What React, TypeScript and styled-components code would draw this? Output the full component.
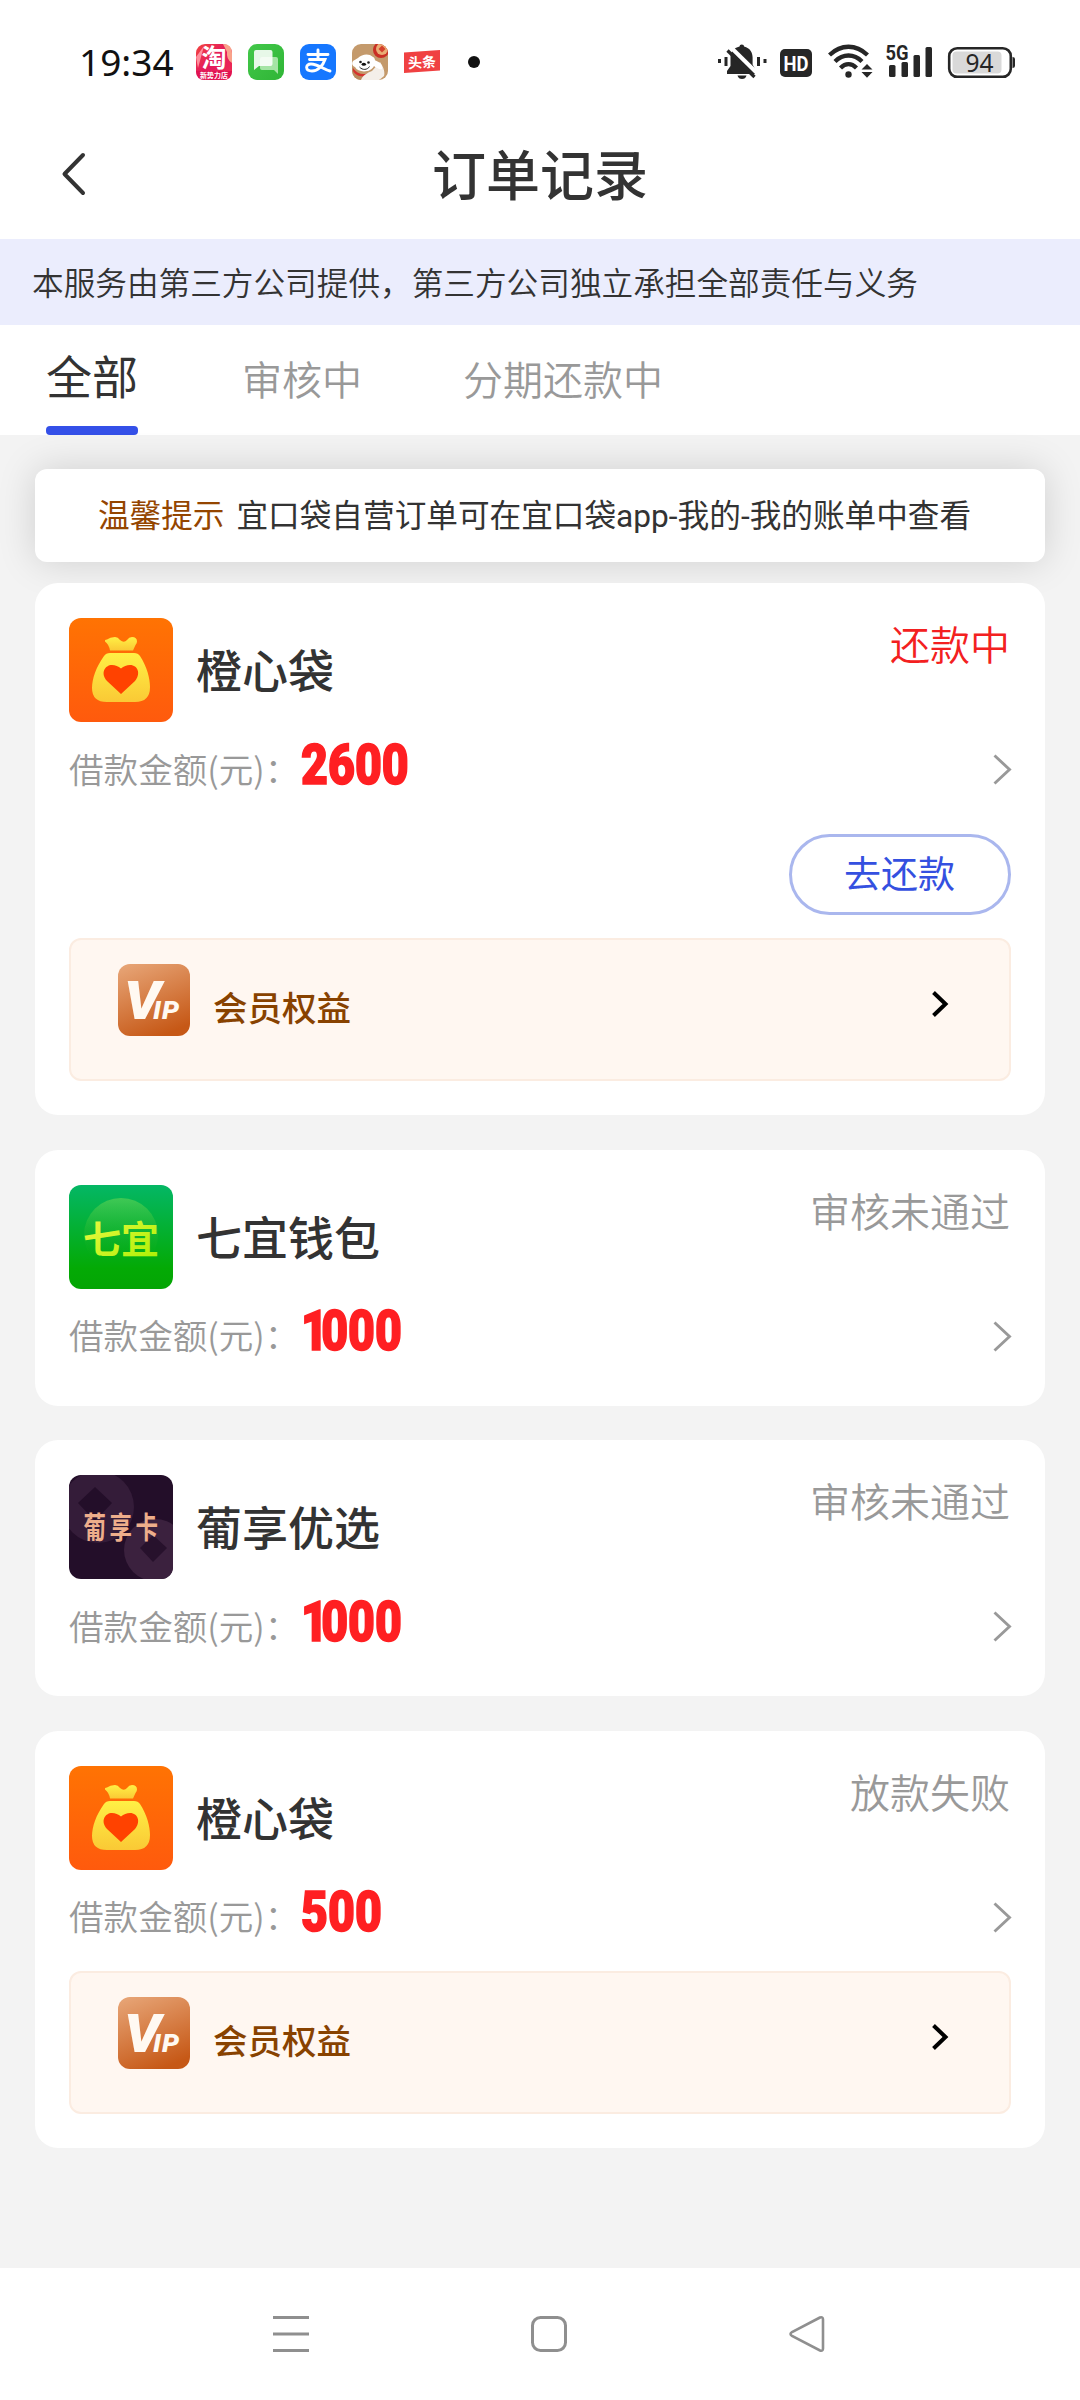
import React from 'react';
import styled, { createGlobalStyle } from 'styled-components';

const FONT = '"Noto Sans", "Noto Sans CJK SC", sans-serif';

const GlobalStyle = createGlobalStyle`
  * { box-sizing: border-box; }
  body { margin: 0; background: #f3f3f3; font-family: ${FONT}; color: #333; }
  svg { overflow: visible; }
`;

const Screen = styled.div`
  width: 1080px;
  height: 2400px;
  display: flex;
  flex-direction: column;
  background: #f3f3f3;
  overflow: hidden;
`;

const StatusBar = styled.div`
  height: 110px;
  flex: none;
  padding: 14px 64px 0 79px;
  display: flex;
  align-items: center;
  justify-content: space-between;
  background: #fff;
`;

const Time = styled.span`
  width: 118px;
  font-size: 37px;
  line-height: 44px;
  font-weight: 450;
  color: #111;
`;

const StatusLeft = styled.div`
  display: flex;
  align-items: center;
  gap: 16px;
  ${Time} { margin-right: -17px; }
`;

const StatusRight = styled.div`
  display: flex;
  align-items: center;
`;

const TitleBar = styled.header`
  height: 129px;
  flex: none;
  display: grid;
  grid-template-columns: 100px 1fr 100px;
  align-items: center;
  background: #fff;
`;

const BackButton = styled.button`
  border: 0;
  background: none;
  padding: 0 0 2px 60px;
  display: flex;
`;

const Title = styled.h1`
  margin: 0;
  font-size: 54px;
  line-height: 80px;
  font-weight: 500;
  text-align: center;
`;

const Notice = styled.div`
  height: 86px;
  flex: none;
  padding: 0 0 3px 32px;
  display: flex;
  align-items: center;
  background: #ebedfd;
  font-size: 31.65px;
  font-weight: 350;
  white-space: nowrap;
`;

const Tabs = styled.nav`
  height: 110px;
  flex: none;
  padding: 0 46px;
  display: flex;
  background: #fff;
`;

const Tab = styled.div<{ $active?: boolean }>`
  height: 110px;
  margin-right: ${p => (p.$active ? 104 : 101)}px;
  padding-top: ${p => (p.$active ? 1 : 4)}px;
  display: flex;
  flex-direction: column;
  justify-content: space-between;
  line-height: ${p => (p.$active ? 100 : 101)}px;
  font-size: ${p => (p.$active ? 46 : 40)}px;
  font-weight: ${p => (p.$active ? 400 : 350)};
  color: ${p => (p.$active ? '#333' : '#999')};
  &::after {
    content: '';
    height: 9px;
    border-radius: 4px;
    background: ${p => (p.$active ? '#3450e8' : 'transparent')};
  }
`;

const Tip = styled.div`
  height: 93px;
  flex: none;
  margin: 34px 35px 21px;
  border-radius: 12px;
  background: #fff;
  box-shadow: 0 0 38px rgba(0, 0, 0, 0.15);
  display: flex;
  align-items: center;
  justify-content: center;
  gap: 12px;
  padding: 0 11px 6px 0;
  font-family: Roboto, "Noto Sans CJK SC", sans-serif;
  font-size: 31.65px;
  font-weight: 370;
  white-space: nowrap;
`;

const TipLabel = styled.span`
  color: #944500;
`;

const List = styled.main`
  flex: 1;
  padding: 0 35px;
  display: flex;
  flex-direction: column;
  gap: 34.5px;
`;

const Card = styled.section`
  padding: 35px 34px 34px;
  border-radius: 23px;
  background: #fff;
`;

const CardHead = styled.div`
  height: 104px;
  display: flex;
  align-items: center;
`;

const Logo = styled.svg`
  width: 104px;
  height: 104px;
  border-radius: 12px;
  flex: none;
  overflow: hidden;
`;

const Name = styled.h2`
  margin: 0 0 0 23px;
  font-size: 46px;
  font-weight: 500;
  line-height: 60px;
`;

const State = styled.span<{ $live?: boolean }>`
  margin: 0 1px 0 auto;
  align-self: flex-start;
  font-size: 40px;
  font-weight: 350;
  line-height: 54px;
  color: ${p => (p.$live ? '#f32020' : '#999')};
`;

const AmountRow = styled.div`
  height: 83px;
  padding-top: 12px;
  display: flex;
  align-items: center;
  color: #999;
`;

const AmountLabel = styled.span`
  width: 232px;
  padding-bottom: 4px;
  font-family: "Noto Sans CJK SC", sans-serif;
  font-size: 34.6px;
  line-height: 48px;
  font-weight: 350;
  white-space: nowrap;
`;

const Amount = styled.span<{ $tight: boolean }>`
  flex: 1;
  font-family: Roboto, sans-serif;
  font-size: 55px;
  font-weight: 900;
  line-height: 60px;
  color: #ff1f22;
  -webkit-text-stroke: 1.6px #ff1f22;
  transform: translateY(-5px) scaleX(0.845);
  transform-origin: left center;
  &::first-letter { letter-spacing: ${p => (p.$tight ? -8 : 0)}px; }
`;

const Actions = styled.div`
  margin-top: 29px;
  margin-bottom: 23px;
  display: flex;
  justify-content: flex-end;
`;

const PayButton = styled.button`
  width: 222px;
  height: 81px;
  padding: 0 1px 5px 0;
  border: 3px solid #aab7ee;
  border-radius: 41px;
  background: #fff;
  font: 400 37px ${FONT};
  color: #3450e0;
`;

const Benefit = styled.div`
  margin-top: 18px;
  height: 143px;
  padding: 24px 60px 0 47px;
  border: 2px solid #fbece1;
  border-radius: 12px;
  background: #fff7f1;
  display: flex;
  align-items: flex-start;
`;

const BenefitText = styled.span`
  flex: 1;
  margin-left: 23px;
  padding-top: 16px;
  font-size: 34.5px;
  line-height: 56px;
  font-weight: 500;
  color: #884200;
`;

const BenefitArrow = styled.svg`
  margin-top: 26px;
`;

const NavBar = styled.footer`
  height: 132px;
  flex: none;
  padding: 0 252px 0 270px;
  display: flex;
  align-items: center;
  justify-content: space-between;
  background: #fff;
`;

const cjk = { fontFamily: 'Noto Sans CJK SC, sans-serif', fontWeight: 700 } as const;

const TaobaoIcon = () => (
  <svg width="36" height="36" viewBox="0 0 36 36">
    <defs>
      <linearGradient id="tb" x1="0" y1="0" x2="1" y2="1">
        <stop offset="0" stopColor="#f2453f" />
        <stop offset=".5" stopColor="#e3185d" />
        <stop offset="1" stopColor="#f0304f" />
      </linearGradient>
    </defs>
    <rect width="36" height="36" rx="9" fill="url(#tb)" />
    <path d="M27 0q9 0 9 9v10q-6-4-5-11z" fill="#f9a28a" />
    <path d="M0 13l8-11L2 24z" fill="#ff8e9c" />
    <text x="18" y="22.500" fontSize="25" textAnchor="middle" fill="#fff" {...cjk}>淘</text>
    <path d="M0 27h36q0 9-9 9H9q-9 0-9-9z" fill="#e11352" />
    <text x="18" y="34.300" fontSize="7" textAnchor="middle" fill="#fff" {...cjk}>新势力店</text>
  </svg>
);

const MessageIcon = () => (
  <svg width="36" height="36" viewBox="0 0 36 36">
    <defs>
      <linearGradient id="ms" x1="0" y1="0" x2="1" y2="1">
        <stop offset="0" stopColor="#43c84a" />
        <stop offset="1" stopColor="#2fb536" />
      </linearGradient>
    </defs>
    <rect width="36" height="36" rx="9" fill="url(#ms)" />
    <path d="M14 13h14q2 0 2 2v15l-4-4H14q-2 0-2-2v-9q0-2 2-2z" fill="#a5e4a5" />
    <path d="M8 6h14.500q2 0 2 2v12q0 2-2 2H11l-5 4V8q0-2 2-2z" fill="#fff" opacity=".88" />
  </svg>
);

const AlipayIcon = () => (
  <svg width="36" height="36" viewBox="0 0 36 36">
    <rect width="36" height="36" rx="9" fill="#1677ff" />
    <path
      d="M8 10.500h20M18 6v9M9.500 15.500h15.500c-2 6-7 11.500-13 11.500-7 0-7-7-1-7 7 0 12 5 19 7"
      fill="none" stroke="#fff" strokeWidth="2.900" strokeLinecap="round"
    />
  </svg>
);

const JdIcon = () => (
  <svg width="36" height="36" viewBox="0 0 36 36">
    <defs><clipPath id="jd"><rect width="36" height="36" rx="9" /></clipPath></defs>
    <g clipPath="url(#jd)">
      <rect width="36" height="36" fill="#c49a6c" />
      <path d="M0 23c3 5 8 7 13 8l2 5H3q-3-5-3-13z" fill="#b98a5c" />
      <path d="M1 24c4 6 10 8 19 4l1 2c-8 4-17 3-20-3z" fill="#d6342e" />
      <path d="M9 36c2-5 6-7 11-9l8-9c4 6 5 10 4 14l-6 5z" fill="#f4efe9" />
      <path d="M1 17c-2 3 0 5 2 6 3 6 16 6 19-1 1-3 2-8-1-9-4-4-11-3-15 1z" fill="#fff" />
      <path d="M22 16c4 1 9 4 8 9-3 1-7-2-9-4z" fill="#fff" />
      <circle cx="8.500" cy="18" r="1.300" fill="#222" />
      <circle cx="16.500" cy="18.500" r="1.300" fill="#222" />
      <ellipse cx="11.800" cy="20.300" rx="2.200" ry="1.500" fill="#111" />
      <path d="M7.500 23c3 3.500 8 3 10-.5" fill="none" stroke="#222" strokeWidth="1" />
      <circle cx="29" cy="6" r="8" fill="#c92f24" />
      <circle cx="30" cy="5" r="6" fill="#e9ad74" />
      <path d="M30 1.500l3.500 3.500-3.500 3.500-3.500-3.500z" fill="#d4402c" />
    </g>
  </svg>
);

const ToutiaoIcon = () => (
  <svg width="36" height="36" viewBox="0 0 36 36">
    <path d="M0 8.500L36 6v20.500L0 29z" fill="#f04142" />
    <text x="18" y="23.500" fontSize="14" textAnchor="middle" fill="#fff" transform="rotate(-3 18 18)" {...cjk}>头条</text>
  </svg>
);

const Dot = () => (
  <svg width="44" height="12" viewBox="0 0 44 12"><circle cx="18" cy="6" r="6" fill="#111" /></svg>
);

const SystemIcons = () => (
  <svg width="298" height="36" viewBox="718 44 298 36" fill="#262626">
    <path d="M739.500 46.500q0-2 2.300-2t2.300 2c6 1.500 8.500 6 8.500 11v7l3.400 6.500v3h-29v-3l3.500-5v-9c0-5 3-9 9-10.500z" />
    <path d="M737.500 75.500h9q-1 3.500-4.500 3.500t-4.500-3.500z" />
    <path d="M730 46.500L759 75" stroke="#fff" strokeWidth="4" />
    <path d="M727.500 50.500L754.500 77" stroke="#262626" strokeWidth="3.200" />
    <path d="M718 59h3v4h-3zM724.500 57h3v9h-3zM757 57h3v9h-3zM763.500 59h3v4h-3z" />
    <rect x="780" y="49" width="32" height="28" rx="5" />
    <text x="796" y="71" fontSize="21" textAnchor="middle" textLength="25" lengthAdjust="spacingAndGlyphs" fill="#fff" fontFamily="Roboto" fontWeight="700">HD</text>
    <g fill="none" stroke="#262626" strokeWidth="4.300">
      <path d="M829.500 55c11.500-11 26.500-11 38 0" />
      <path d="M835 61.500c8-8 19-8 27 0" />
      <path d="M840.500 68c5-5 11-5 16 0" />
    </g>
    <circle cx="848.500" cy="74.500" r="3.200" />
    <path d="M861.500 69.500l5.500-5.500 5.500 5.500zM861.500 72l5.500 5.800 5.500-5.800z" />
    <text x="885.500" y="60" fontSize="20" textLength="23" lengthAdjust="spacingAndGlyphs" fontFamily="Roboto" fontWeight="700">5G</text>
    <rect x="889" y="65" width="6.500" height="12" rx="1.500" />
    <rect x="901.500" y="62" width="6.500" height="15" rx="1.500" />
    <rect x="913.500" y="55" width="6.500" height="22" rx="1.500" />
    <rect x="925.500" y="47" width="6.500" height="30" rx="1.500" />
    <rect x="949.200" y="48.200" width="61.600" height="28.600" rx="8" fill="#fff" stroke="#262626" strokeWidth="2.600" />
    <rect x="952.500" y="51.500" width="49" height="22" rx="4" fill="#d9d9d9" />
    <path d="M1012.500 57q2.500 0 2.500 2v7q0 2-2.500 2z" />
    <text x="979.500" y="71.500" fontSize="24.500" textAnchor="middle" fontFamily="Noto Sans">94</text>
  </svg>
);

const OrangeLogo = () => (
  <Logo viewBox="0 0 104 104">
    <defs>
      <linearGradient id="og" x1="0" y1="0" x2="0" y2="1">
        <stop offset="0" stopColor="#ff7303" /><stop offset="1" stopColor="#ff5a0d" />
      </linearGradient>
      <linearGradient id="bag" x1="0" y1="0" x2="0" y2="1">
        <stop offset="0" stopColor="#fff045" /><stop offset="1" stopColor="#fac935" />
      </linearGradient>
    </defs>
    <rect width="104" height="104" fill="url(#og)" />
    <path d="M36 23.500q-.5-2 2-2 3-2.500 8-2.500 3 0 5 3 4 3.500 7 0 2-3 5-3 5 0 5 4.500 0 1.500-1.500 3.500L64 32.500H41q-1-6-5-9z" fill="url(#bag)" />
    <path d="M41 35h24q4 0 6 3c7 11 10 22 10 31q0 15-15 15H38q-15 0-15-14c0-9 4-21 12-32q2-3 6-3z" fill="url(#bag)" />
    <path d="M52 76L38 63c-7-8-2-16 5-16q5 0 9 3.500 4-3.500 9-3.500c8 0 11 9 5 16z" fill="#ff4200" />
  </Logo>
);

const GreenLogo = () => (
  <Logo viewBox="0 0 104 104">
    <defs>
      <linearGradient id="gr" x1="0" y1="0" x2="0" y2="1">
        <stop offset="0" stopColor="#04b765" /><stop offset=".8" stopColor="#04aa05" /><stop offset="1" stopColor="#04a504" />
      </linearGradient>
      <linearGradient id="gc" x1="0" y1="0" x2="0" y2="1">
        <stop offset="0" stopColor="#7cdc54" stopOpacity=".5" /><stop offset=".8" stopColor="#20b020" stopOpacity="0" />
      </linearGradient>
      <linearGradient id="gt" x1="0" y1="0" x2="1" y2="1">
        <stop offset="0" stopColor="#f4f84a" /><stop offset="1" stopColor="#a8f000" />
      </linearGradient>
    </defs>
    <rect width="104" height="104" fill="url(#gr)" />
    <circle cx="52" cy="50" r="37" fill="url(#gc)" />
    <text x="52" y="67.500" fontSize="38" textAnchor="middle" fill="url(#gt)" {...cjk}>七宜</text>
  </Logo>
);

const PurpleLogo = () => (
  <Logo viewBox="0 0 104 104">
    <rect width="104" height="104" fill="#230e29" />
    <circle cx="29" cy="32" r="36" fill="#341c39" />
    <path d="M26 12l17 16-17 18L9 28z" fill="#230e29" />
    <circle cx="86" cy="75" r="31" fill="#3b213e" />
    <path d="M84 60l14 13-14 14-13-14z" fill="#27112c" />
    <text x="53.500" y="0" fontSize="22.500" letterSpacing="3.500" textAnchor="middle" fill="#eeae8b" transform="translate(0 63) scale(1 1.32)" {...cjk}>葡享卡</text>
  </Logo>
);

const VipIcon = () => (
  <svg width="72" height="72" viewBox="0 0 72 72">
    <defs>
      <linearGradient id="vp" x1="0.2" y1="0" x2="0.6" y2="1">
        <stop offset="0" stopColor="#e6a273" /><stop offset="1" stopColor="#c65816" />
      </linearGradient>
    </defs>
    <rect width="72" height="72" rx="12" fill="url(#vp)" />
    <text y="55" fill="#fff9f2" fontFamily="Roboto" fontWeight="900" fontStyle="italic" fontSize="53" transform="scale(1.08 1)">
      <tspan x="5.500">V</tspan><tspan x="32.500" fontSize="25" letterSpacing="1">IP</tspan>
    </text>
  </svg>
);

const RowArrow = () => (
  <svg width="18" height="31" viewBox="0 0 18 31">
    <path d="M1.500 1.500L16.500 15.500 1.500 29.500" fill="none" stroke="#999" strokeWidth="2.900" />
  </svg>
);

type Order = {
  id: number;
  name: string;
  logo: React.FC;
  state: string;
  amount: string;
  live?: boolean;
  vip?: boolean;
};

const orders: Order[] = [
  { id: 1, name: '橙心袋', logo: OrangeLogo, state: '还款中', amount: '2600', live: true, vip: true },
  { id: 2, name: '七宜钱包', logo: GreenLogo, state: '审核未通过', amount: '1000' },
  { id: 3, name: '葡享优选', logo: PurpleLogo, state: '审核未通过', amount: '1000' },
  { id: 4, name: '橙心袋', logo: OrangeLogo, state: '放款失败', amount: '500', vip: true },
];

const OrderCard = ({ order }: { order: Order }) => {
  const Mark = order.logo;
  return (
    <Card>
      <CardHead>
        <Mark />
        <Name>{order.name}</Name>
        <State $live={order.live}>{order.state}</State>
      </CardHead>
      <AmountRow>
        <AmountLabel>借款金额(元)：</AmountLabel>
        <Amount $tight={order.amount.startsWith('1')}>{order.amount}</Amount>
        <RowArrow />
      </AmountRow>
      {order.live && <Actions><PayButton>去还款</PayButton></Actions>}
      {order.vip && (
        <Benefit>
          <VipIcon />
          <BenefitText>会员权益</BenefitText>
          <BenefitArrow width="18" height="28" viewBox="0 0 18 28">
            <path d="M2.500 2.500L14.500 14 2.500 25.500" fill="none" stroke="#000" strokeWidth="4" />
          </BenefitArrow>
        </Benefit>
      )}
    </Card>
  );
};

export default function App() {
  return (
    <Screen>
      <GlobalStyle />
      <StatusBar>
        <StatusLeft>
          <Time>19:34</Time>
          <TaobaoIcon />
          <MessageIcon />
          <AlipayIcon />
          <JdIcon />
          <ToutiaoIcon />
          <Dot />
        </StatusLeft>
        <StatusRight><SystemIcons /></StatusRight>
      </StatusBar>
      <TitleBar>
        <BackButton aria-label="返回">
          <svg width="26" height="44" viewBox="0 0 26 44">
            <path d="M23 3L4.500 22 23 41" fill="none" stroke="#333" strokeWidth="4" strokeLinecap="round" strokeLinejoin="round" />
          </svg>
        </BackButton>
        <Title>订单记录</Title>
      </TitleBar>
      <Notice>本服务由第三方公司提供，第三方公司独立承担全部责任与义务</Notice>
      <Tabs>
        <Tab $active>全部</Tab>
        <Tab>审核中</Tab>
        <Tab>分期还款中</Tab>
      </Tabs>
      <Tip>
        <TipLabel>温馨提示</TipLabel>
        <span>宜口袋自营订单可在宜口袋app-我的-我的账单中查看</span>
      </Tip>
      <List>
        {orders.map(order => <OrderCard key={order.id} order={order} />)}
      </List>
      <NavBar>
        <svg width="42" height="42" viewBox="0 0 42 42" stroke="#8f8f8f" strokeWidth="3.200">
          <path d="M3 4.500h36M3 21h36M3 37.500h36" />
        </svg>
        <svg width="42" height="42" viewBox="0 0 42 42">
          <rect x="4.500" y="4.500" width="33" height="33" rx="8" fill="none" stroke="#8f8f8f" strokeWidth="3" />
        </svg>
        <svg width="42" height="42" viewBox="0 0 42 42">
          <path d="M34 4.500L6 19q-3 2 0 4l28 14.500q3 1 3-2v-29q0-3-3-2z" fill="none" stroke="#8f8f8f" strokeWidth="2.600" />
        </svg>
      </NavBar>
    </Screen>
  );
}
